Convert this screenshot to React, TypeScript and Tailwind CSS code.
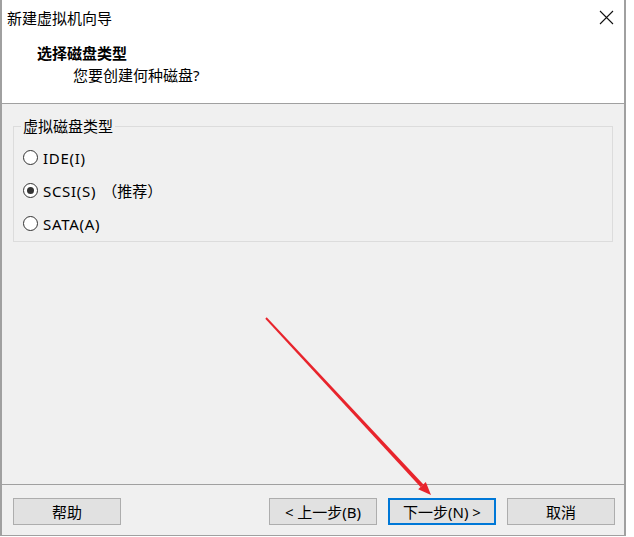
import React from "react";

const FONT = '"Noto Sans", "Noto Sans CJK SC", sans-serif';

function Radio({ checked, label, extra }: { checked?: boolean; label: string; extra?: string }) {
  return (
    <div className="flex h-[33px] items-center pl-[9px]">
      <span className="flex h-[15px] w-[15px] items-center justify-center rounded-full border border-[#333333] bg-white">
        {checked && <span className="h-[7px] w-[7px] rounded-full bg-[#333333]" />}
      </span>
      <span className="ml-[5px] text-[15px] leading-[20px] tracking-[0.7px] text-black">{label}</span>
      {extra && <span className="ml-[6px] text-[15px] leading-[20px] text-black">{extra}</span>}
    </div>
  );
}

function Btn({ children, primary }: { children: React.ReactNode; primary?: boolean }) {
  return (
    <button
      className={
        "flex h-[27px] w-[108px] items-center justify-center bg-[#e1e1e1] text-[15px] leading-[20px] text-black " +
        (primary ? "border-2 border-[#0078d7]" : "border border-[#adadad]")
      }
    >
      {children}
    </button>
  );
}

export default function App() {
  return (
    <div className="relative h-[537px] w-[634px] overflow-hidden bg-white" style={{ fontFamily: FONT }}>
      <div className="flex h-[536px] w-[626px] flex-col border-x-2 border-b border-[#a0a0a0] bg-white">
        {/* title bar */}
        <div className="flex h-[35px] items-center justify-between pl-[5px] pr-[10px]">
          <span className="text-[15px] leading-[20px] text-black">新建虚拟机向导</span>
          <svg width="15" height="15" viewBox="0 0 15 15">
            <path d="M1 1 L14 14 M14 1 L1 14" stroke="#111" strokeWidth="1.1" fill="none" />
          </svg>
        </div>
        {/* header */}
        <div className="h-[69px] border-b border-[#a0a0a0] bg-white pt-[8px]">
          <div className="pl-[35px] text-[15px] font-bold leading-[20px] text-black">选择磁盘类型</div>
          <div className="mt-[2px] pl-[71px] text-[15px] leading-[20px] text-black">您要创建何种磁盘?</div>
        </div>
        {/* content */}
        <div className="h-[381px] border-b border-[#a0a0a0] bg-[#f0f0f0] px-[11px] pt-[14px]">
          <fieldset className="border border-[#dcdcdc] pb-[1px] pt-[7px]">
            <legend className="ml-[7px] px-[2px] text-[15px] leading-[16px] text-black">虚拟磁盘类型</legend>
            <Radio label="IDE(I)" />
            <Radio label="SCSI(S)" extra="（推荐）" checked />
            <Radio label="SATA(A)" />
          </fieldset>
        </div>
        {/* buttons */}
        <div className="flex h-[50px] items-start bg-[#f0f0f0] pl-[11px] pr-[9px] pt-[13px]">
          <Btn>帮助</Btn>
          <div className="flex-1" />
          <div className="flex gap-[11px]">
            <Btn>&lt; 上一步(B)</Btn>
            <Btn primary>下一步(N) &gt;</Btn>
            <Btn>取消</Btn>
          </div>
        </div>
      </div>
      {/* red annotation arrow */}
      <svg className="pointer-events-none absolute left-0 top-0" width="634" height="537" viewBox="0 0 634 537">
        <polygon points="265.3,318.7 266.7,317.3 423.5,484.5 420.5,487.0" fill="#e8242c" />
        <polygon points="431,495 418.2,489.2 425.8,481.9" fill="#e8242c" />
      </svg>
    </div>
  );
}
